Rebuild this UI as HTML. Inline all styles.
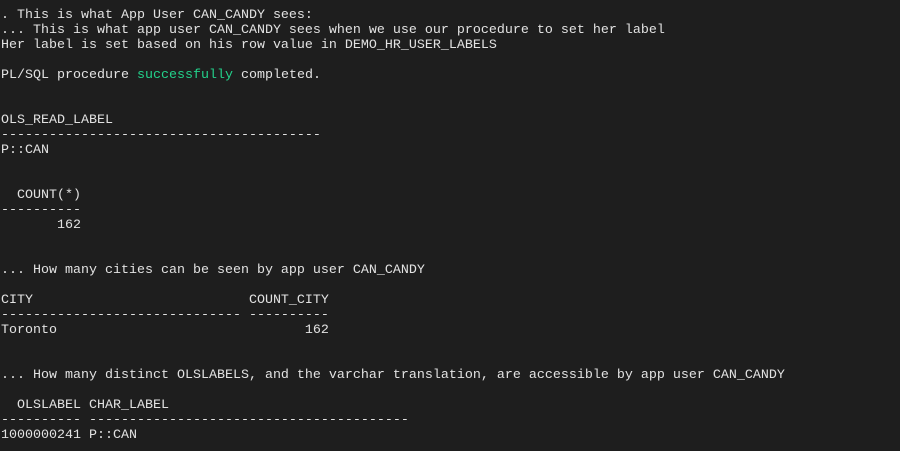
<!DOCTYPE html>
<html><head><meta charset="utf-8"><style>
html,body{margin:0;padding:0;background:#1e1e1e;width:900px;height:451px;overflow:hidden}
pre{margin:0;position:absolute;left:1px;top:8px;font-family:"Liberation Mono",monospace;font-size:13.33px;line-height:15px;color:#e2e2e2}
.g{color:#23d18b}
</style></head><body><pre>. This is what App User CAN_CANDY sees:
... This is what app user CAN_CANDY sees when we use our procedure to set her label
Her label is set based on his row value in DEMO_HR_USER_LABELS

PL/SQL procedure <span class="g">successfully</span> completed.


OLS_READ_LABEL
----------------------------------------
P::CAN


  COUNT(*)
----------
       162


... How many cities can be seen by app user CAN_CANDY

CITY                           COUNT_CITY
------------------------------ ----------
Toronto                               162


... How many distinct OLSLABELS, and the varchar translation, are accessible by app user CAN_CANDY

  OLSLABEL CHAR_LABEL
---------- ----------------------------------------
1000000241 P::CAN</pre></body></html>
